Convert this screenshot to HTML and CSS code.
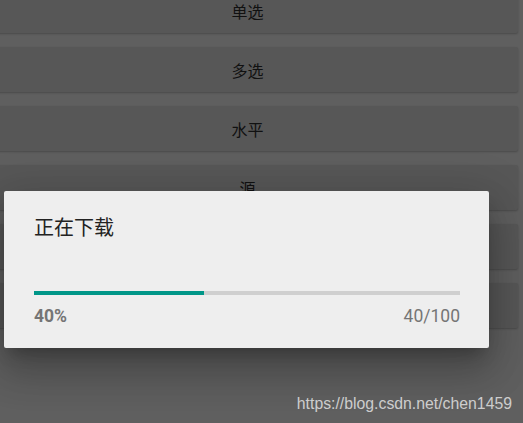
FILE: index.html
```html
<!DOCTYPE html>
<html lang="zh">
<head>
<meta charset="utf-8">
<title>正在下载</title>
<link rel="stylesheet" href="styles.css">
</head>
<body>
<div class="screen">
  <div class="button-list">
    <div class="btn">单选</div>
    <div class="btn">多选</div>
    <div class="btn">水平</div>
    <div class="btn">源</div>
    <div class="btn">垂直</div>
    <div class="btn">自定义</div>
  </div>

  <div class="dialog">
    <div class="dialog-title">正在下载</div>
    <div class="progress"><div class="progress-fill" style="width:40%"></div></div>
    <div class="progress-labels">
      <span class="percent">40%</span>
      <span class="count">40/100</span>
    </div>
  </div>

  <div class="watermark">https://blog.csdn.net/chen1459</div>
</div>
</body>
</html>
```

FILE: styles.css
```css
html, body {
  margin: 0;
  padding: 0;
}
body {
  background: #5f5f5f;
  width: 523px;
  height: 423px;
  overflow: hidden;
}
.screen {
  position: relative;
  width: 523px;
  height: 423px;
  overflow: hidden;
}
.button-list {
  display: flex;
  flex-direction: column;
  gap: 14px;
  margin: -12px 5px 0 -23px;
}
.btn {
  height: 45px;
  background: #575757;
  border-radius: 2px;
  box-shadow: 0 1px 2px rgba(0, 0, 0, 0.22);
  display: flex;
  align-items: center;
  justify-content: center;
  font-family: "Noto Sans CJK SC", "Noto Sans", sans-serif;
  font-size: 16px;
  color: #111111;
}
.dialog {
  position: absolute;
  left: 4px;
  top: 191px;
  width: 485px;
  box-sizing: border-box;
  padding: 22px 29px 22px 30px;
  background: #eeeeee;
  border-radius: 2px;
  box-shadow: 0 11px 15px -7px rgba(0, 0, 0, 0.25),
              0 24px 38px 3px rgba(0, 0, 0, 0.16),
              0 9px 46px 8px rgba(0, 0, 0, 0.14);
}
.dialog-title {
  font-family: "Noto Sans CJK SC", "Noto Sans", sans-serif;
  font-size: 20px;
  line-height: 28px;
  color: #222222;
}
.progress {
  margin-top: 50px;
  height: 4px;
  background: #cfcfcf;
}
.progress-fill {
  height: 100%;
  background: #009688;
}
.progress-labels {
  margin-top: 11px;
  display: flex;
  justify-content: space-between;
  font-family: Roboto, "Noto Sans", sans-serif;
  font-size: 17.5px;
  line-height: 20px;
  color: #757575;
}
.percent {
  font-weight: 700;
}
.watermark {
  position: absolute;
  right: 11px;
  top: 393px;
  font-family: "Liberation Sans", Arial, sans-serif;
  font-size: 15.8px;
  line-height: 22px;
  color: #cdcdcd;
}
```
